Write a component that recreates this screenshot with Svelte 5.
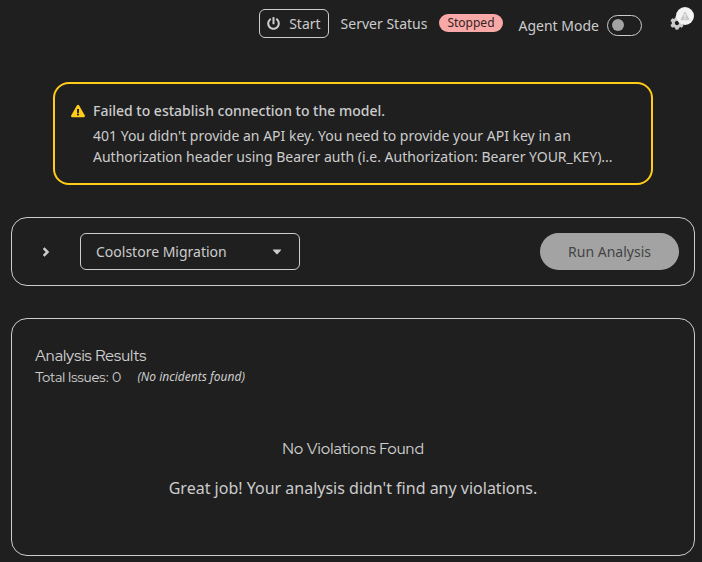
<script>
  let agentMode = $state(false);
  let profile = $state('coolstore');
</script>

<div class="page">
  <header class="toolbar">
    <button class="start" type="button">
      <svg width="13" height="13" viewBox="0 0 512 512" aria-hidden="true">
        <path fill="currentColor" d="M400 54.100c63 45 104 118.600 104 201.900 0 136.800-110.800 247.700-247.500 248C120 504.300 8.200 393 8 256.400 7.900 173.100 48.900 99.300 111.800 54.200c11.700-8.300 28-4.800 35 7.700L162.600 90c5.900 10.500 3.100 23.800-6.600 31-41.500 30.800-68 79.600-68 134.900-.1 92.300 74.500 168.100 168 168.100 91.600 0 168.600-74.200 168-169.100-.3-51.800-24.700-101.800-68.100-134-9.700-7.200-12.400-20.500-6.500-30.900l15.800-28.100c7-12.400 23.200-16.100 34.800-7.800zM296 264V24c0-13.300-10.700-24-24-24h-32c-13.300 0-24 10.700-24 24v240c0 13.300 10.700 24 24 24h32c13.300 0 24-10.700 24-24z" />
      </svg>
      <span>Start</span>
    </button>
    <span class="status">Server Status</span>
    <span class="badge">Stopped</span>
    <label class="agent">
      <span>Agent Mode</span>
      <input type="checkbox" role="switch" bind:checked={agentMode} />
    </label>
    <button class="settings" type="button" aria-label="Settings">
      <svg width="14" height="14" viewBox="0 0 512 512" aria-hidden="true">
        <path fill="currentColor" d="M487.400 315.700l-42.600-24.600c4.300-23.200 4.300-47 0-70.200l42.600-24.600c4.900-2.800 7.100-8.600 5.500-14-11.100-35.600-30-67.800-54.700-94.600-3.800-4.100-10-5.100-14.800-2.300L380.800 110c-17.900-15.400-38.500-27.300-60.800-35.100V25.800c0-5.600-3.900-10.500-9.400-11.700-36.700-8.200-74.300-7.800-109.200 0-5.500 1.200-9.400 6.100-9.400 11.700V75c-22.200 7.900-42.800 19.800-60.800 35.100L88.700 85.500c-4.900-2.800-11-1.900-14.800 2.300-24.700 26.700-43.600 58.900-54.700 94.600-1.700 5.400.6 11.200 5.500 14L67.300 221c-4.300 23.200-4.300 47 0 70.200l-42.600 24.600c-4.900 2.800-7.100 8.600-5.500 14 11.100 35.600 30 67.800 54.700 94.600 3.800 4.100 10 5.100 14.800 2.300l42.600-24.600c17.900 15.400 38.500 27.300 60.800 35.100v49.200c0 5.600 3.900 10.500 9.400 11.700 36.700 8.200 74.300 7.800 109.200 0 5.500-1.200 9.400-6.100 9.400-11.700v-49.200c22.200-7.900 42.800-19.800 60.800-35.100l42.600 24.600c4.900 2.800 11 1.900 14.800-2.300 24.700-26.700 43.600-58.900 54.700-94.600 1.500-5.500-.7-11.300-5.600-14.100zM256 336c-44.100 0-80-35.900-80-80s35.900-80 80-80 80 35.900 80 80-35.900 80-80 80z" />
      </svg>
      <span class="notice">
        <svg width="10" height="10" viewBox="0 0 10 10" aria-hidden="true">
          <path d="M5 1.200 8.800 8.600H1.200Z" fill="#c9c9c9" stroke="#c9c9c9" stroke-width="1.200" stroke-linejoin="round" />
          <path d="M5 3v3.200M5 7v1.200" stroke="#f2f2f2" stroke-width="1.200" />
        </svg>
      </span>
    </button>
  </header>

  <main>
    <section class="alert" role="alert">
      <svg class="warn" width="14" height="14" viewBox="0 0 576 512" aria-hidden="true">
        <path fill="currentColor" d="M569.500 440c18.500 32-4.700 72-41.600 72H48.100c-36.900 0-60-40.100-41.600-72L246.400 24c18.500-32 64.700-32 83.200 0l239.900 416zM288 354c-25.400 0-46 20.600-46 46s20.600 46 46 46 46-20.600 46-46-20.600-46-46-46zm-43.700-165.300l7.400 136c.4 6.400 5.600 11.300 12 11.300h48.600c6.400 0 11.600-5 12-11.300l7.400-136c.4-6.900-5.100-12.700-12-12.700h-63.400c-6.900 0-12.300 5.800-12 12.700z" />
      </svg>
      <div>
        <h4>Failed to establish connection to the model.</h4>
        <p>401 You didn't provide an API key. You need to provide your API key in an Authorization header using Bearer auth (i.e. Authorization: Bearer YOUR_KEY)...</p>
      </div>
    </section>

    <section class="card controls">
      <button class="expand" type="button" aria-label="Show details">
        <svg width="8" height="10" viewBox="0 0 8 10" aria-hidden="true">
          <path d="M1.700 1.200 5.500 5 1.700 8.800" fill="none" stroke="currentColor" stroke-width="2.500" />
        </svg>
      </button>
      <div class="picker">
        <select aria-label="Profile" bind:value={profile}>
          <option value="coolstore">Coolstore Migration</option>
        </select>
        <svg width="10" height="6" viewBox="0 0 10 6" aria-hidden="true">
          <path d="M1.300.5h7.400q.8 0 .3.700L5.600 5q-.6.600-1.200 0L1 1.200q-.5-.7.300-.7Z" fill="currentColor" />
        </svg>
      </div>
      <button class="run" type="button" disabled>Run Analysis</button>
    </section>

    <section class="card results">
      <h2>Analysis Results</h2>
      <div class="totals">
        <span class="count">Total Issues: 0</span>
        <em>(No incidents found)</em>
      </div>
      <div class="empty">
        <h3>No Violations Found</h3>
        <p>Great job! Your analysis didn't find any violations.</p>
      </div>
    </section>
  </main>
</div>

<style>
  :global(body) {
    background: #1f1f1f;
  }
  .page {
    padding: 8px 7px 6px 11px;
    color: #ccc;
    font: 14px/21px "Noto Sans", sans-serif;
  }
  h2, h3, h4, p {
    margin: 0;
  }
  button, select {
    font: inherit;
    color: inherit;
    background: none;
    cursor: pointer;
  }
  .toolbar {
    display: flex;
    align-items: center;
    justify-content: flex-end;
    height: 30px;
    padding-right: 1px;
  }
  .start {
    display: flex;
    align-items: center;
    gap: 9px;
    height: 29px;
    padding: 0 7px;
    border: 1px solid #ccc;
    border-radius: 6px;
  }
  .status {
    margin-left: 12px;
  }
  .badge {
    margin-left: 12px;
    padding: 0 8px;
    border-radius: 9px;
    background: #f9a8a8;
    color: #332424;
    font-size: 12px;
    line-height: 18px;
  }
  .agent {
    display: flex;
    align-items: center;
    gap: 8px;
    margin-left: 16px;
    padding-top: 4px;
  }
  .agent input {
    appearance: none;
    display: flex;
    align-items: center;
    width: 35px;
    height: 21px;
    margin: 0;
    padding: 0 4px;
    box-sizing: border-box;
    border: 1px solid #ccc;
    border-radius: 11px;
  }
  .agent input::before {
    content: "";
    width: 12px;
    height: 12px;
    border-radius: 50%;
    background: #a3a3a3;
  }
  .agent input:checked {
    justify-content: flex-end;
  }
  .settings {
    position: relative;
    display: flex;
    margin-left: 28px;
    padding: 0 10px 0 0;
    border: 0;
  }
  .notice {
    position: absolute;
    top: -9px;
    right: 0;
    display: grid;
    place-items: center;
    width: 18px;
    height: 18px;
    border-radius: 50%;
    background: #f2f2f2;
  }
  .alert {
    display: flex;
    gap: 8px;
    max-width: 600px;
    box-sizing: border-box;
    margin: 44px auto 32px;
    padding: 16px;
    border: 2px solid #ffcc17;
    border-radius: 16px;
  }
  .warn {
    flex: none;
    margin-top: 4px;
    color: #ffcc17;
  }
  .alert h4 {
    margin-bottom: 4px;
    font-size: 14px;
    font-weight: 500;
  }
  .alert p {
    padding-right: 16px;
  }
  .card {
    border: 1px solid #ccc;
    border-radius: 16px;
  }
  .controls {
    display: flex;
    align-items: center;
    padding: 15px;
  }
  .expand {
    display: flex;
    padding: 8px 16px 8px 15px;
    border: 0;
  }
  .picker {
    display: grid;
    align-items: center;
    width: 220px;
    margin-left: 14px;
  }
  .picker > * {
    grid-area: 1 / 1;
  }
  .picker select {
    appearance: none;
    width: 100%;
    height: 37px;
    padding: 0 32px 0 15px;
    border: 1px solid #ccc;
    border-radius: 6px;
  }
  .picker option {
    background: #1f1f1f;
  }
  .picker svg {
    justify-self: end;
    margin-right: 18px;
    pointer-events: none;
  }
  .run {
    height: 37px;
    margin-left: auto;
    padding: 0 28px;
    border: 0;
    border-radius: 19px;
    background: #a3a3a3;
    color: #444;
    cursor: default;
  }
  .results {
    margin-top: 32px;
    padding: 25px 23px 55px;
  }
  h2, h3, .count {
    font-family: "Red Hat Display", Lato, sans-serif;
    font-weight: 400;
  }
  h2, h3 {
    font-size: 16px;
    line-height: 24px;
  }
  .totals {
    display: flex;
    align-items: center;
    gap: 16px;
    line-height: 18px;
  }
  .totals em {
    font-size: 12px;
  }
  .empty {
    margin-top: 51px;
    text-align: center;
  }
  .empty p {
    margin-top: 15px;
    font-size: 16px;
    line-height: 24px;
  }
</style>
